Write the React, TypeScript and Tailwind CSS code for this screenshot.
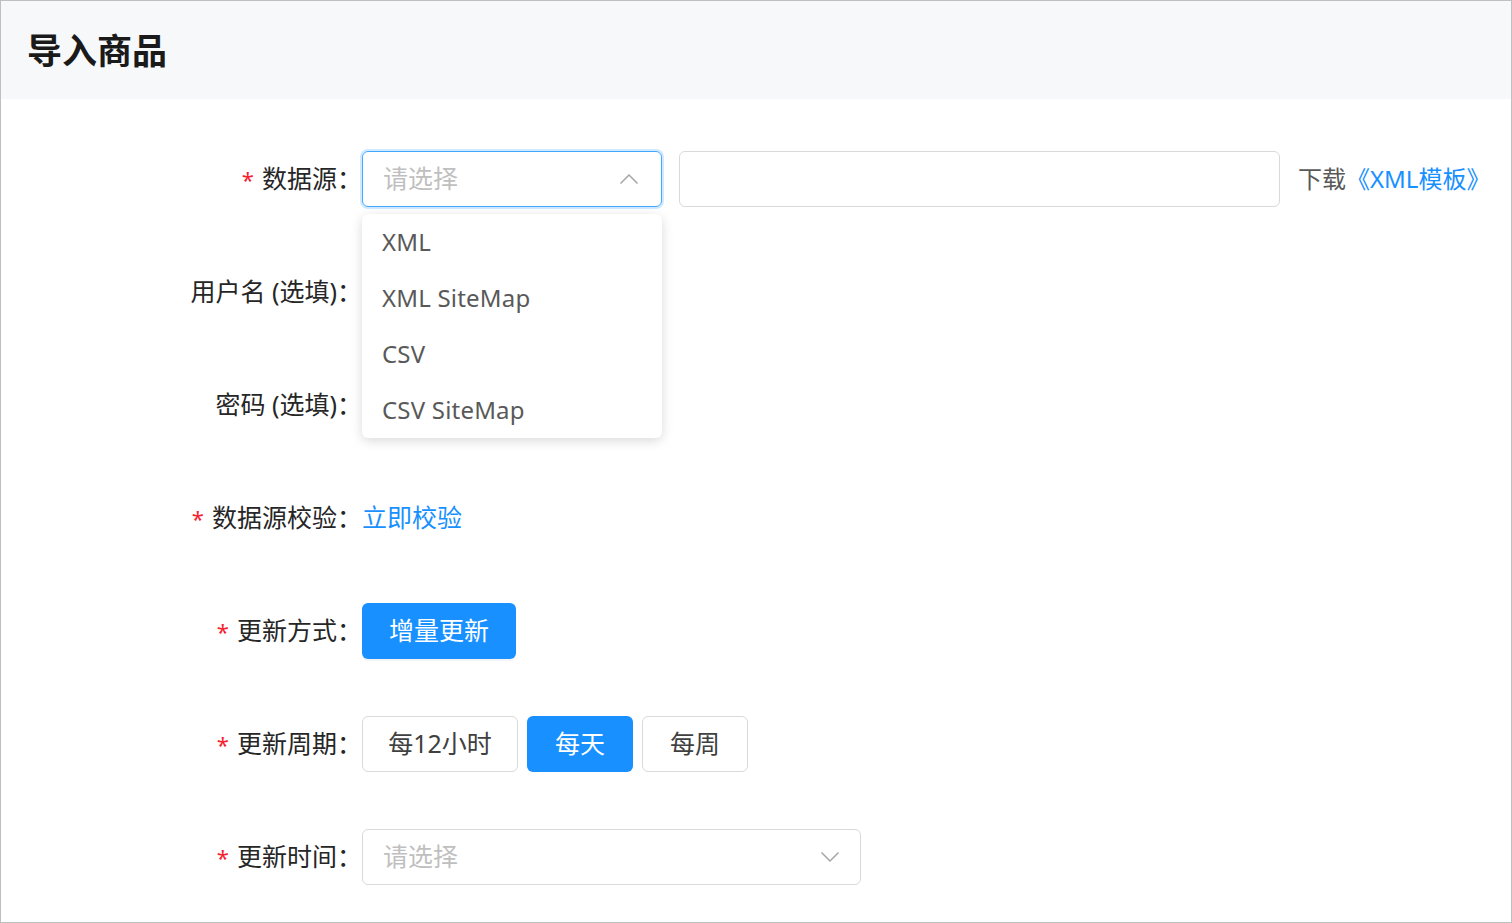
import React from "react";

const FONT = { fontFamily: '"Noto Sans", "Noto Sans CJK SC", sans-serif' };

function Label({ text, required }: { text: string; required?: boolean }) {
  return (
    <div className="w-[361px] shrink-0 flex justify-end items-center text-[25px] text-[#262626]">
      {required && <span className="text-[#f5222d] mr-[8px] text-[22px]">*</span>}
      <span>{text}</span>
    </div>
  );
}

function ChevronUp() {
  return (
    <svg width="20" height="12" viewBox="0 0 20 12" fill="none">
      <polyline points="1.5,10.5 10,2 18.5,10.5" stroke="#a6a6a6" strokeWidth="1.5" />
    </svg>
  );
}

function ChevronDown() {
  return (
    <svg width="20" height="12" viewBox="0 0 20 12" fill="none">
      <polyline points="1.5,1.5 10,10 18.5,1.5" stroke="#a6a6a6" strokeWidth="1.5" />
    </svg>
  );
}

export default function App() {
  return (
    <div style={FONT} className="w-[1512px] h-[923px] border border-[#bfbfbf] bg-white overflow-hidden">
      <div className="h-[98px] bg-[#f7f8fa] flex items-center pl-[26px]">
        <h1 className="text-[35px] font-bold text-[#1a1a1a] leading-none">导入商品</h1>
      </div>
      <div className="pt-[52px] flex flex-col gap-[57px]">
        {/* Row 1 */}
        <div className="h-[56px] flex items-center">
          <Label text="数据源：" required />
          <div className="relative">
            <div className="w-[300px] h-[56px] rounded-[6px] border border-[#40a9ff] shadow-[0_0_0_2px_rgba(24,144,255,0.2)] flex items-center justify-between pl-[20px] pr-[22px]">
              <span className="text-[25px] text-[#bfbfbf]">请选择</span>
              <ChevronUp />
            </div>
            <div className="absolute left-0 top-[63px] w-[300px] h-[224px] rounded-[6px] bg-white shadow-[0_3px_12px_rgba(0,0,0,0.15)] flex flex-col z-10">
              {["XML", "XML SiteMap", "CSV", "CSV SiteMap"].map((t) => (
                <div key={t} className="h-[56px] flex items-center pl-[20px] text-[24px] text-[#595959] tracking-[0.2px]">
                  {t}
                </div>
              ))}
            </div>
          </div>
          <div className="ml-[17px] w-[601px] h-[56px] rounded-[6px] border border-[#d9d9d9]" />
          <div className="ml-[18px] text-[24px] text-[#595959] flex items-center">
            <span>下载</span>
            <span className="text-[#1890ff]">《XML模板》</span>
          </div>
        </div>
        {/* Row 2 */}
        <div className="h-[56px] flex items-center">
          <Label text="用户名 (选填)：" />
        </div>
        {/* Row 3 */}
        <div className="h-[56px] flex items-center">
          <Label text="密码 (选填)：" />
        </div>
        {/* Row 4 */}
        <div className="h-[56px] flex items-center">
          <Label text="数据源校验：" required />
          <span className="text-[25px] text-[#1890ff]">立即校验</span>
        </div>
        {/* Row 5 */}
        <div className="h-[56px] flex items-center">
          <Label text="更新方式：" required />
          <button className="w-[154px] h-[56px] rounded-[6px] bg-[#1890ff] text-white text-[25px] shadow-[0_2px_0_rgba(0,0,0,0.045)]">
            增量更新
          </button>
        </div>
        {/* Row 6 */}
        <div className="h-[56px] flex items-center">
          <Label text="更新周期：" required />
          <div className="flex gap-[9px]">
            <button className="w-[156px] h-[56px] rounded-[6px] border border-[#d9d9d9] bg-white text-[25px] text-[#404040]">
              每12小时
            </button>
            <button className="w-[106px] h-[56px] rounded-[6px] bg-[#1890ff] text-white text-[25px]">
              每天
            </button>
            <button className="w-[106px] h-[56px] rounded-[6px] border border-[#d9d9d9] bg-white text-[25px] text-[#404040]">
              每周
            </button>
          </div>
        </div>
        {/* Row 7 */}
        <div className="h-[56px] flex items-center">
          <Label text="更新时间：" required />
          <div className="w-[499px] h-[56px] rounded-[6px] border border-[#d9d9d9] flex items-center justify-between pl-[20px] pr-[20px]">
            <span className="text-[25px] text-[#bfbfbf]">请选择</span>
            <ChevronDown />
          </div>
        </div>
      </div>
    </div>
  );
}
